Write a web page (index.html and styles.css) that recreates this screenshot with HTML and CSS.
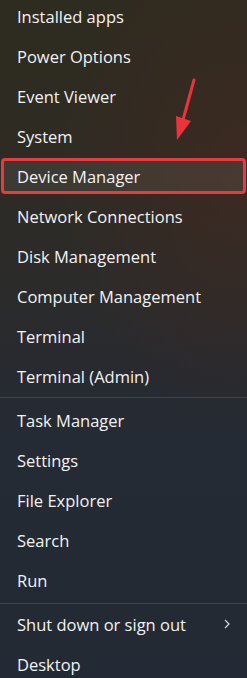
FILE: index.html
```html
<!DOCTYPE html>
<html lang="en">
    <head>
        <meta charset="UTF-8" />
        <title>Quick Link menu</title>
        <link rel="stylesheet" href="styles.css">
    </head>
    <body>

        <div class="menu">
            <div class="menu-item">Installed apps</div>
            <div class="menu-item">Power Options</div>
            <div class="menu-item">Event Viewer</div>
            <div class="menu-item">System</div>
            <div class="menu-item highlighted">Device Manager</div>
            <div class="menu-item">Network Connections</div>
            <div class="menu-item">Disk Management</div>
            <div class="menu-item">Computer Management</div>
            <div class="menu-item">Terminal</div>
            <div class="menu-item">Terminal (Admin)</div>

            <div class="separator"></div>

            <div class="menu-item">Task Manager</div>
            <div class="menu-item">Settings</div>
            <div class="menu-item">File Explorer</div>
            <div class="menu-item">Search</div>
            <div class="menu-item">Run</div>

            <div class="separator lower"></div>

            <div class="menu-item">
                <span>Shut down or sign out</span>
                <svg class="chevron" width="6" height="10" viewBox="0 0 6 10">
                    <path d="M1 1 L5 5 L1 9" fill="none" stroke="#d6d8dc" stroke-width="1.2" />
                </svg>
            </div>
            <div class="menu-item">Desktop</div>
        </div>

        <!-- red pointer arrow over the menu -->
        <svg class="pointer" width="40" height="70" viewBox="0 0 40 70">
            <line x1="34" y1="10" x2="23" y2="50" stroke="#e8353c" stroke-width="3" stroke-linecap="round" />
            <polygon points="16,46 31,51 17,70" fill="#e8353c" />
        </svg>

    </body>
</html>
```

FILE: styles.css
```css
body {
    margin: 0;
    width: 247px;
    height: 678px;
    overflow: hidden;
    font-family: 'Open Sans', 'Noto Sans', sans-serif;
    color: #f2f2f2;
    background:
        radial-gradient(ellipse 180px 260px at 240px 170px, rgba(70, 40, 30, 0.55), transparent),
        linear-gradient(180deg, #2e2b20 0%, #2f2b24 25%, #2b2b2c 45%, #252a33 62%, #232a35 100%);
}

.menu {
    display: flex;
    flex-direction: column;
    padding: 0 1px;
    margin-top: -2px;
}

.menu-item {
    height: 36px;
    margin-bottom: 4px;
    padding: 0 14px 0 16px;
    display: flex;
    align-items: center;
    justify-content: space-between;
    font-size: 16.5px;
    box-sizing: border-box;
    border-radius: 4px;
}

.menu-item.highlighted {
    background-color: rgba(255, 255, 255, 0.07);
    border: 3px solid #e63c40;
    padding-left: 13px;
}

.chevron {
    margin-right: 2px;
}

.separator {
    height: 1px;
    margin: -1px -1px 4px;
    background-color: #3c4450;
}

.separator.lower {
    margin-top: 1px;
    margin-bottom: 2px;
}

.pointer {
    position: absolute;
    left: 160px;
    top: 70px;
}
```
